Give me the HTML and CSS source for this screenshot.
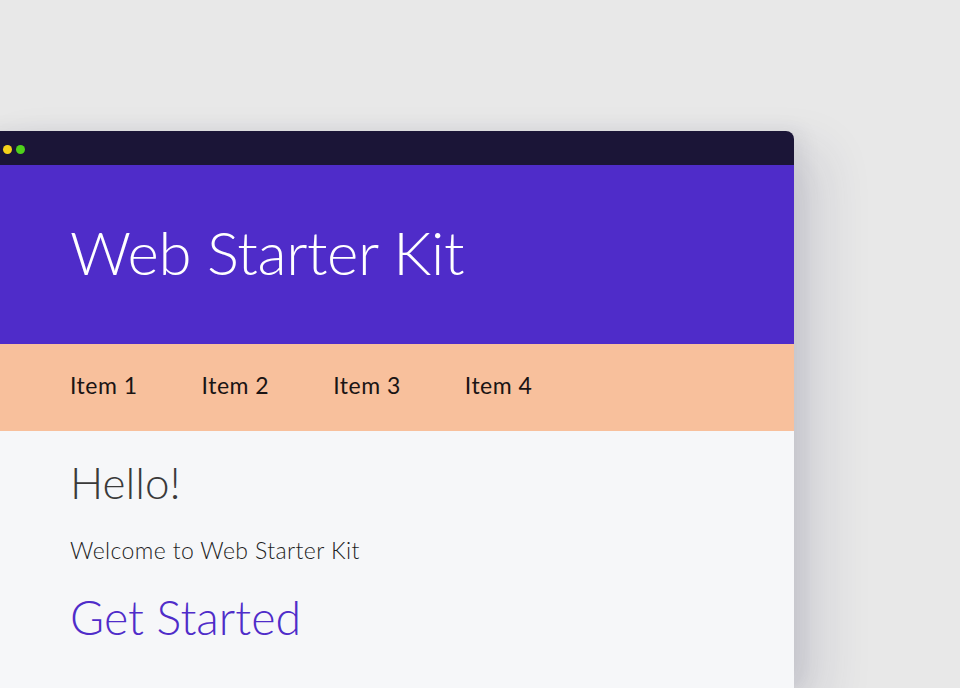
FILE: index.html
```html
<!DOCTYPE html>
<html>
<head>
<meta charset="utf-8">
<link rel="stylesheet" href="styles.css">
</head>
<body>
<div class="stage">
  <div class="window">
    <div class="titlebar">
      <span class="dot red"></span>
      <span class="dot yellow"></span>
      <span class="dot green"></span>
    </div>
    <header class="header">
      <h1 class="title">Web Starter Kit</h1>
    </header>
    <nav class="nav">
      <a class="nav-item">Item 1</a>
      <a class="nav-item">Item 2</a>
      <a class="nav-item">Item 3</a>
      <a class="nav-item">Item 4</a>
    </nav>
    <main class="content">
      <h2 class="hello">Hello!</h2>
      <p class="welcome">Welcome to Web Starter Kit</p>
      <h2 class="started">Get Started</h2>
    </main>
  </div>
</div>
</body>
</html>
```
FILE: styles.css
```css
html, body {
  margin: 0;
  padding: 0;
  height: 100%;
  overflow: hidden;
}
body {
  background: #e8e8e8;
  font-family: "Lato", "Liberation Sans", sans-serif;
}
.stage {
  padding-top: 131px;
}
.window {
  width: 818px;
  margin-left: -24px;
  border-radius: 8px 8px 0 0;
  overflow: hidden;
  box-shadow: 30px 20px 50px rgba(40, 40, 80, 0.12), 8px 0 20px rgba(40, 40, 80, 0.08);
  background: #f6f7f9;
  height: 557px;
}
.titlebar {
  height: 34px;
  background: #1b1537;
  display: flex;
  align-items: center;
  gap: 4px;
  padding-left: 14px;
}
.dot {
  width: 9px;
  height: 9px;
  border-radius: 50%;
  margin-top: 2px;
}
.red { background: #ff5f56; }
.yellow { background: #f5d21a; }
.green { background: #4fd11b; }
.header {
  background: #4f2cc9;
  height: 179px;
  padding-left: 94px;
  display: flex;
  align-items: center;
}
.title {
  margin: 0;
  color: #ffffff;
  font-weight: 300;
  font-size: 60px;
  letter-spacing: -0.4px;
  line-height: 70px;
  margin-top: -6px;
}
.nav {
  background: #f8c09c;
  height: 87px;
  padding-left: 94px;
  display: flex;
  align-items: center;
  gap: 64px;
}
.nav-item {
  font-size: 23px;
  color: #1a1414;
  font-weight: 400;
  letter-spacing: 0.5px;
  line-height: 28px;
  margin-top: -6px;
}
.content {
  padding-left: 94px;
  padding-top: 25px;
}
.hello {
  margin: 0;
  font-size: 44px;
  font-weight: 300;
  color: #3a3a3a;
  line-height: 52px;
}
.welcome {
  margin: 27px 0 0;
  font-size: 23px;
  font-weight: 300;
  letter-spacing: 0.4px;
  color: #1e1e1e;
  line-height: 30px;
}
.started {
  margin: 26px 0 0;
  font-size: 46.5px;
  font-weight: 300;
  color: #4f2cc9;
  line-height: 52px;
}
```
